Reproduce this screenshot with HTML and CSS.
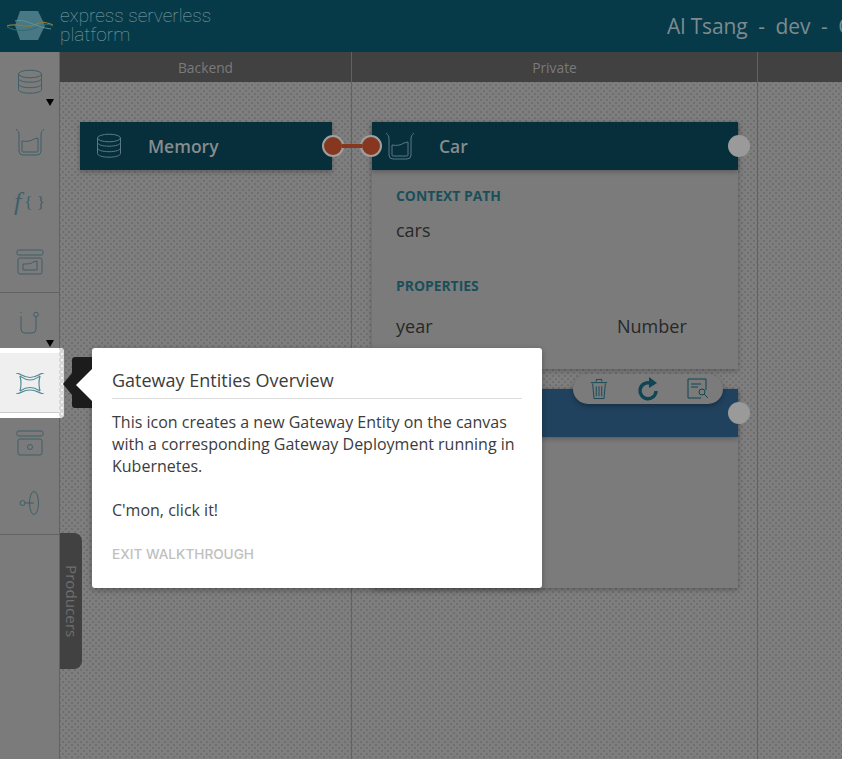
FILE: index.html
```html
<!DOCTYPE html>
<html lang="en">
<head>
    <meta charset="UTF-8">
    <title>express serverless platform</title>
    <link rel="stylesheet" href="styles.css">
</head>
<body>

    <!-- top bar -->
    <header class="topbar">
        <div class="brand">
            <svg class="brand-logo" width="50" height="34" viewBox="0 0 50 34">
                <polygon points="13,2 31,2 38,16.5 31,31 13,31 8,16.5" fill="#477883"/>
                <path d="M0 17 C10 13 18 20 27 16 S38 13 46 16" fill="none" stroke="#8a7a3a" stroke-width="1.2"/>
                <path d="M0 18 C10 23 20 22 28 19 S40 14 46 17" fill="none" stroke="#2f6a78" stroke-width="1"/>
                <path d="M8 12 C18 9 28 18 44 20" fill="none" stroke="#5d929c" stroke-width="1"/>
            </svg>
            <div class="brand-name">express serverless<br>platform</div>
        </div>
        <div class="user-info">Al Tsang &nbsp;-&nbsp; dev &nbsp;-&nbsp; Car</div>
    </header>

    <div class="main">
        <!-- tool sidebar -->
        <nav class="sidebar">
            <div class="tool-group">
                <div class="tool has-menu">
                    <svg width="26" height="26" viewBox="0 0 26 26"><use href="#db"/></svg>
                </div>
                <div class="tool">
                    <svg width="30" height="28" viewBox="0 0 30 28"><use href="#beaker"/></svg>
                </div>
                <div class="tool">
                    <span class="fn-icon"><i>f</i><small>{ }</small></span>
                </div>
                <div class="tool">
                    <svg width="28" height="26" viewBox="0 0 28 26">
                        <rect x="1" y="1" width="26" height="5" rx="1.5"/>
                        <rect x="2" y="9" width="24" height="16" rx="2"/>
                        <path d="M7 21 V15 C12 15 15 15 17 13 L21 12 V21 Z"/>
                    </svg>
                </div>
            </div>
            <div class="tool-group">
                <div class="tool has-menu">
                    <svg width="20" height="24" viewBox="0 0 20 24">
                        <path d="M1 1 V2 M1 5 V18 Q1 22 5 22 H12 Q16 22 16 18 V6"/>
                        <circle cx="16" cy="3.5" r="2.3"/>
                    </svg>
                </div>
                <div class="tool tool-active">
                    <div class="tool-highlight">
                        <svg width="28" height="21" viewBox="0 0 28 21">
                            <path d="M0 0 C4 0 7 4.5 14 4.5 S24 0 28 0"/>
                            <path d="M4 3 C7 5 9 7 14 7 S21 5 24 3"/>
                            <path d="M4 18 C7 16 9 14.5 14 14.5 S21 16 24 18"/>
                            <path d="M0 21 C4 21 7 17 14 17 S24 21 28 21"/>
                            <path d="M4 3 Q6 10.5 4 18 M24 3 Q22 10.5 24 18"/>
                        </svg>
                    </div>
                </div>
                <div class="tool">
                    <svg width="28" height="26" viewBox="0 0 28 26">
                        <rect x="1" y="1" width="26" height="5" rx="1.5"/>
                        <rect x="2" y="9" width="24" height="16" rx="2"/>
                        <circle cx="14" cy="17" r="2.5"/>
                    </svg>
                </div>
                <div class="tool">
                    <svg width="22" height="26" viewBox="0 0 22 26">
                        <circle cx="3.5" cy="13" r="2.5"/>
                        <path d="M6 13 H15"/>
                        <ellipse cx="15" cy="13" rx="4.5" ry="11.5"/>
                    </svg>
                </div>
            </div>
        </nav>

        <!-- canvas with the three columns -->
        <div class="canvas">
            <section class="column column-backend">
                <div class="column-head">Backend</div>
                <div class="column-body">
                    <div class="node-head node-memory">
                        <svg class="node-icon" width="26" height="28" viewBox="0 0 26 26"><use href="#db"/></svg>
                        <span class="node-title">Memory</span>
                        <span class="dot dot-red"></span>
                    </div>
                </div>
                <div class="tab-producers">Producers</div>
            </section>

            <section class="column column-private">
                <div class="column-head">Private</div>
                <div class="column-body">
                    <div class="card card-car">
                        <div class="node-head">
                            <svg class="node-icon" width="30" height="28" viewBox="0 0 30 28"><use href="#beaker"/></svg>
                            <span class="node-title">Car</span>
                            <span class="dot dot-red dot-in"></span>
                            <span class="connector"></span>
                            <span class="dot dot-out"></span>
                        </div>
                        <div class="card-body">
                            <h4>CONTEXT PATH</h4>
                            <p class="value">cars</p>
                            <h4 class="props-head">PROPERTIES</h4>
                            <div class="prop-row"><span class="prop-name">year</span><span>Number</span></div>
                        </div>
                    </div>

                    <div class="card card-gateway">
                        <div class="node-head node-blue">
                            <span class="dot dot-out"></span>
                        </div>
                        <div class="actions">
                            <svg width="20" height="24" viewBox="0 0 22 24">
                                <path d="M2 5 H20 M8 4 V1.5 H14 V4 M4 6 L5.5 22.5 H16.5 L18 6 M8 9 V20 M11 9 V20 M14 9 V20"/>
                            </svg>
                            <svg width="24" height="24" viewBox="0 0 24 24">
                                <path class="thick" d="M14 6 A8 8 0 1 0 20 14"/>
                                <polygon class="solid" points="13,0 21,6 13,11"/>
                            </svg>
                            <svg width="24" height="24" viewBox="0 0 24 24">
                                <path d="M15 21 H2 V2 H20 V13 M5 7 H15 M5 10 H12"/>
                                <circle cx="16" cy="15" r="3"/>
                                <path d="M18 17 L22 21"/>
                            </svg>
                        </div>
                    </div>
                </div>
            </section>

            <section class="column column-rest">
                <div class="column-head"></div>
                <div class="column-body"></div>
            </section>
        </div>
    </div>

    <!-- walkthrough popover -->
    <div class="popover">
        <span class="popover-back"></span>
        <span class="popover-tip"></span>
        <h3>Gateway Entities Overview</h3>
        <p>This icon creates a new Gateway Entity on the canvas with a corresponding Gateway Deployment running in Kubernetes.</p>
        <p>C'mon, click it!</p>
        <a class="exit-link">EXIT WALKTHROUGH</a>
    </div>

    <!-- shared icons -->
    <svg class="defs" width="0" height="0">
        <defs>
            <g id="db">
                <ellipse cx="13" cy="5" rx="11.5" ry="3.8"/>
                <path d="M1.5 5 V9.5 C1.5 11.5 6 13.2 13 13.2 S24.5 11.5 24.5 9.5 V5"/>
                <path d="M1.5 9.5 V15 C1.5 17 6 18.7 13 18.7 S24.5 17 24.5 15 V9.5"/>
                <path d="M1.5 15 V20.5 C1.5 22.5 6 24.2 13 24.2 S24.5 22.5 24.5 20.5 V15"/>
            </g>
            <g id="beaker">
                <path d="M1 1 C3 3 4 4 4 7 V23 Q4 27 8 27 H22 Q26 27 26 23 V7 C26 4 27 3 29 1"/>
                <path d="M7 23 V13 C12 14 16 13 19 11 L23 10 V23 Q23 24 22 24 H8 Q7 24 7 23 Z"/>
            </g>
        </defs>
    </svg>

</body>
</html>
```

FILE: styles.css
```css
* {
    box-sizing: border-box;
}

html, body {
    height: 100%;
}

body {
    margin: 0;
    font-family: 'Open Sans', sans-serif;
    background-color: #7b7b7b;
    overflow: hidden;
    position: relative;
}

svg {
    fill: none;
    stroke: #3f5f69;
    stroke-width: 1;
    display: block;
}

.defs {
    position: absolute;
}

/* top bar */
.topbar {
    height: 52px;
    background-color: #073a49;
    display: flex;
    align-items: center;
    justify-content: space-between;
    overflow: hidden;
    white-space: nowrap;
}

.brand {
    display: flex;
    align-items: center;
    padding-left: 7px;
}

.brand-logo {
    stroke: none;
}

.brand-name {
    margin-left: 3px;
    margin-top: -3px;
    font-family: 'Roboto', sans-serif;
    font-weight: 100;
    font-size: 19px;
    line-height: 19px;
    color: #86a4aa;
}

.user-info {
    flex: none;
    width: 175px;
    overflow: hidden;
    font-size: 21px;
    letter-spacing: -0.12px;
    color: #7d8b8f;
}

.main {
    display: flex;
    height: 707px;
}

/* tool sidebar */
.sidebar {
    width: 60px;
    flex: none;
    background-color: #7b7b7b;
    border-right: 1px solid #626262;
}

.tool-group {
    border-bottom: 1px solid #626262;
}

.tool-group + .tool-group {
    padding-bottom: 1px;
}

.tool {
    height: 60px;
    display: flex;
    align-items: center;
    justify-content: center;
    position: relative;
}

.has-menu::after {
    content: "";
    position: absolute;
    left: 46px;
    bottom: 6px;
    border-left: 4px solid transparent;
    border-right: 4px solid transparent;
    border-top: 7px solid #000;
}

.fn-icon {
    font-family: 'Liberation Serif', serif;
    font-size: 26px;
    color: #3f5f69;
    white-space: nowrap;
}

.fn-icon small {
    font-size: 17px;
    margin-left: 3px;
    vertical-align: 2px;
}

.tool-highlight {
    position: absolute;
    top: -5px;
    left: 0;
    width: 64px;
    height: 70px;
    z-index: 3;
    display: flex;
    align-items: center;
    justify-content: center;
    padding-right: 5px;
    background-color: #efefef;
    border-top: 5px solid #fff;
    border-bottom: 5px solid #fff;
    border-radius: 0 4px 4px 0;
    box-shadow: inset 0 -1px 0 #ccc;
}

/* light strip of the canvas showing through the highlight */
.tool-highlight::after {
    content: "";
    position: absolute;
    top: -5px;
    bottom: -5px;
    right: 0;
    width: 5px;
    border-radius: 0 4px 4px 0;
    background-color: #f4f4f4;
    background-image:
        linear-gradient(45deg, transparent 40%, #d8d8d8 40%, #d8d8d8 60%, transparent 60%),
        linear-gradient(-45deg, transparent 40%, #d8d8d8 40%, #d8d8d8 60%, transparent 60%);
    background-size: 6px 6px;
}

.tool-highlight svg {
    stroke: #4f8a94;
    stroke-width: 1.2;
}

/* canvas */
.canvas {
    flex: 1;
    display: flex;
    min-width: 0;
}

.column {
    display: flex;
    flex-direction: column;
    position: relative;
}

.column-backend {
    width: 292px;
    border-right: 1px solid #626262;
}

.column-private {
    width: 406px;
    border-right: 1px solid #626262;
}

.column-rest {
    flex: 1;
}

.column-head {
    height: 30px;
    background-color: #414141;
    color: #7a7a7a;
    font-size: 13.8px;
    line-height: 32px;
    text-align: center;
    flex: none;
}

.column-body {
    flex: 1;
    padding-top: 40px;
    background-color: #6f6f6f;
    background-image:
        linear-gradient(45deg, transparent 38%, #7e7e7e 38%, #7e7e7e 62%, transparent 62%),
        linear-gradient(-45deg, transparent 38%, #7e7e7e 38%, #7e7e7e 62%, transparent 62%);
    background-size: 6px 6px;
}

.tab-producers {
    position: absolute;
    left: 0;
    top: 481px;
    width: 22px;
    height: 136px;
    background-color: #414141;
    border-radius: 0 8px 8px 0;
    color: #6e6e6e;
    font-size: 15.2px;
    line-height: 20px;
    writing-mode: vertical-rl;
    padding-top: 32px;
}

/* nodes */
.node-head {
    height: 48px;
    background-color: #062f3b;
    display: flex;
    align-items: center;
    position: relative;
    box-shadow: 0 2px 5px rgba(0, 0, 0, 0.25);
}

.node-head svg {
    stroke: #5a7982;
}

.node-memory {
    width: 252px;
    margin-left: 20px;
    padding-left: 16px;
}

.node-title {
    font-size: 17.5px;
    font-weight: 600;
    color: #858c8f;
    margin-left: 26px;
}

.card .node-title {
    margin-left: 24px;
}

.card {
    width: 366px;
    margin-left: 20px;
    position: relative;
    background-color: #7b7b7b;
    box-shadow: 0 2px 5px rgba(0, 0, 0, 0.25);
}

.card-car {
    height: 247px;
    margin-bottom: 20px;
}

.card-gateway {
    height: 199px;
}

.card-car .node-icon {
    margin-left: 13px;
}

.node-blue {
    background-color: #20425e;
}

.card-body {
    padding: 16px 24px;
}

.card-body h4 {
    margin: 0;
    font-size: 13.9px;
    font-weight: 700;
    color: #1a4f5a;
    line-height: 20px;
}

.value {
    margin: 12px 0 0;
    font-size: 18px;
    line-height: 24px;
    color: #282828;
}

.card-body .props-head {
    margin-top: 34px;
}

.prop-row {
    display: flex;
    margin-top: 18px;
    font-size: 18px;
    line-height: 24px;
    color: #282828;
}

.prop-name {
    width: 221px;
}

/* connector dots */
.dot {
    position: absolute;
    width: 22px;
    height: 22px;
    border-radius: 50%;
    background-color: #9a9a9a;
}

.dot-out {
    top: 13px;
    right: -12px;
}

.dot-red {
    background-color: #853720;
    border: 2px solid #a0a0a0;
}

.node-memory .dot-red {
    top: 13px;
    right: -12px;
}

.dot-in {
    top: 13px;
    left: -12px;
}

.connector {
    position: absolute;
    top: 22px;
    left: -30px;
    width: 20px;
    height: 4px;
    background-color: #853720;
}

/* hover actions on the gateway card */
.actions {
    position: absolute;
    top: -15px;
    left: 201px;
    width: 150px;
    height: 30px;
    border-radius: 15px;
    background-color: #7b7b7b;
    box-shadow: 0 2px 5px rgba(0, 0, 0, 0.3);
    display: flex;
    align-items: center;
    justify-content: space-between;
    padding: 0 13px 0 16px;
}

.actions svg {
    stroke: #0f4655;
}

.actions .thick {
    stroke-width: 3.4;
}

.actions .solid {
    fill: #0f4655;
    stroke: none;
}

/* walkthrough popover */
.popover {
    position: absolute;
    left: 92px;
    top: 348px;
    width: 450px;
    height: 240px;
    padding: 20px;
    background-color: #fff;
    border-radius: 3px;
    box-shadow: 0 2px 6px rgba(0, 0, 0, 0.3);
    z-index: 5;
}

.popover h3 {
    margin: 0;
    padding-bottom: 5px;
    border-bottom: 1px solid #ddd;
    font-size: 18px;
    font-weight: 400;
    line-height: 25px;
    color: #3c3c3c;
}

.popover p {
    margin: 12px 0 22px;
    font-size: 16px;
    line-height: 22px;
    color: #3c3c3c;
}

.exit-link {
    display: block;
    margin-top: 25px;
    font-family: 'Inter', sans-serif;
    font-size: 13.6px;
    font-weight: 500;
    color: #c0c0c0;
}

.popover-back {
    position: absolute;
    left: -20px;
    top: 9px;
    width: 20px;
    height: 51px;
    background-color: #1c1c1c;
    border-radius: 3px 0 0 3px;
}

.popover-back::before {
    content: "";
    position: absolute;
    left: -9px;
    top: 16px;
    border-top: 11px solid transparent;
    border-bottom: 11px solid transparent;
    border-right: 9px solid #1c1c1c;
}

.popover-tip {
    position: absolute;
    left: -16px;
    top: 21px;
    border-top: 16px solid transparent;
    border-bottom: 16px solid transparent;
    border-right: 16px solid #fff;
}
```
